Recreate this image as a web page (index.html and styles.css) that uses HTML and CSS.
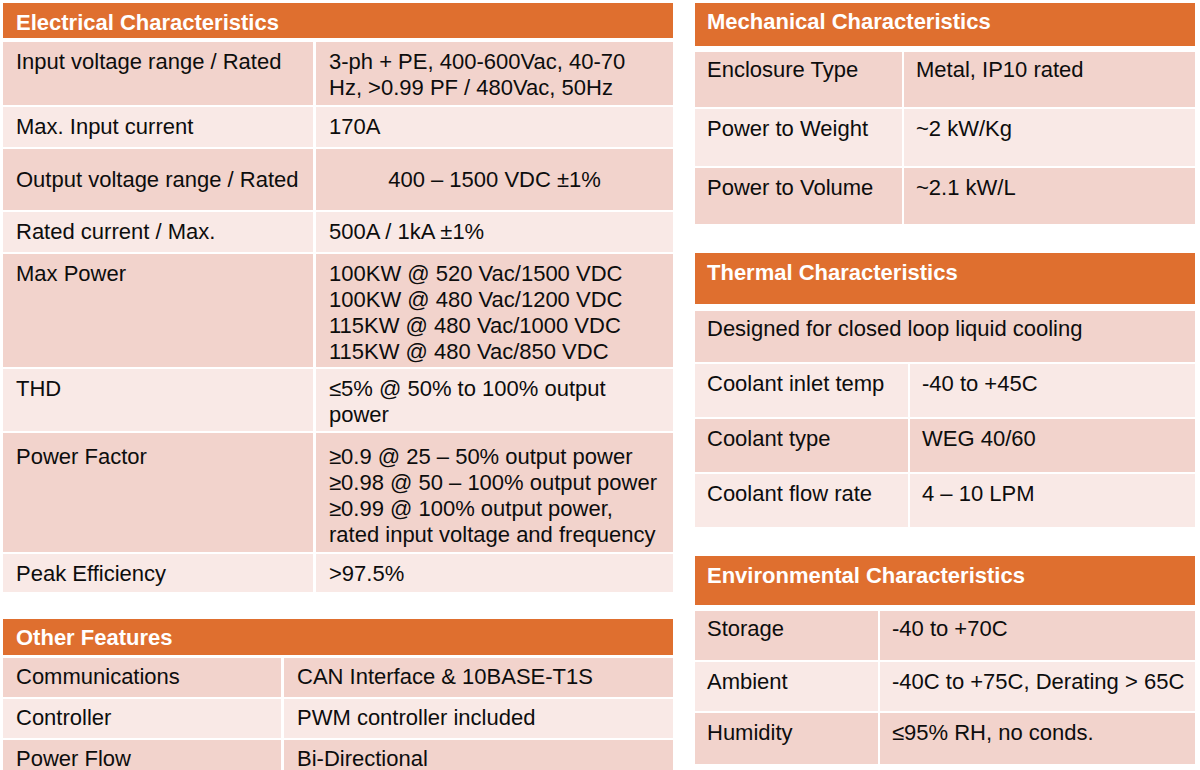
FILE: index.html
```html
<!DOCTYPE html>
<html lang="en">
<head>
<meta charset="utf-8">
<title>Specifications</title>
<link rel="stylesheet" href="styles.css">
</head>
<body>
<main class="page">
  <div class="col col-left">
    <section class="spec spec-elec">
      <h2 class="spec-head">Electrical Characteristics</h2>
      <div class="spec-body">
        <div class="row dark"><div class="cell">Input voltage range / Rated</div><div class="cell">3-ph + PE, 400-600Vac, 40-70<br>Hz, &gt;0.99 PF / 480Vac, 50Hz</div></div>
        <div class="row light"><div class="cell">Max. Input current</div><div class="cell">170A</div></div>
        <div class="row dark"><div class="cell cell-mid">Output voltage range / Rated</div><div class="cell cell-center">400 – 1500 VDC ±1%</div></div>
        <div class="row light"><div class="cell">Rated current / Max.</div><div class="cell">500A / 1kA ±1%</div></div>
        <div class="row dark"><div class="cell">Max Power</div><div class="cell">100KW @ 520 Vac/1500 VDC<br>100KW @ 480 Vac/1200 VDC<br>115KW @ 480 Vac/1000 VDC<br>115KW @ 480 Vac/850 VDC</div></div>
        <div class="row light"><div class="cell">THD</div><div class="cell">≤5% @ 50% to 100% output<br>power</div></div>
        <div class="row dark row-pf"><div class="cell">Power Factor</div><div class="cell">≥0.9 @ 25 – 50% output power<br>≥0.98 @ 50 – 100% output power<br>≥0.99 @ 100% output power,<br>rated input voltage and frequency</div></div>
        <div class="row light"><div class="cell">Peak Efficiency</div><div class="cell">&gt;97.5%</div></div>
      </div>
    </section>

    <section class="spec spec-other">
      <h2 class="spec-head">Other Features</h2>
      <div class="spec-body">
        <div class="row dark"><div class="cell">Communications</div><div class="cell">CAN Interface &amp; 10BASE-T1S</div></div>
        <div class="row light"><div class="cell">Controller</div><div class="cell">PWM controller included</div></div>
        <div class="row dark"><div class="cell">Power Flow</div><div class="cell">Bi-Directional</div></div>
      </div>
    </section>
  </div>

  <div class="col col-right">
    <section class="spec spec-mech">
      <h2 class="spec-head">Mechanical Characteristics</h2>
      <div class="spec-body">
        <div class="row dark"><div class="cell">Enclosure Type</div><div class="cell">Metal, IP10 rated</div></div>
        <div class="row light"><div class="cell">Power to Weight</div><div class="cell">~2 kW/Kg</div></div>
        <div class="row dark"><div class="cell">Power to Volume</div><div class="cell">~2.1 kW/L</div></div>
      </div>
    </section>

    <section class="spec spec-therm">
      <h2 class="spec-head">Thermal Characteristics</h2>
      <div class="spec-body">
        <div class="row dark row-full"><div class="cell">Designed for closed loop liquid cooling</div></div>
        <div class="row light"><div class="cell">Coolant inlet temp</div><div class="cell">-40 to +45C</div></div>
        <div class="row dark"><div class="cell">Coolant type</div><div class="cell">WEG 40/60</div></div>
        <div class="row light"><div class="cell">Coolant flow rate</div><div class="cell">4 – 10 LPM</div></div>
      </div>
    </section>

    <section class="spec spec-env">
      <h2 class="spec-head">Environmental Characteristics</h2>
      <div class="spec-body">
        <div class="row dark"><div class="cell">Storage</div><div class="cell">-40 to +70C</div></div>
        <div class="row light"><div class="cell">Ambient</div><div class="cell">-40C to +75C, Derating &gt; 65C</div></div>
        <div class="row dark"><div class="cell">Humidity</div><div class="cell">≤95% RH, no conds.</div></div>
      </div>
    </section>
  </div>
</main>
</body>
</html>
```

FILE: styles.css
```css
html, body {
  margin: 0;
  padding: 0;
  background: #ffffff;
}

body {
  width: 1200px;
  height: 770px;
  overflow: hidden;
  font-family: "Liberation Sans", Arial, sans-serif;
  font-size: 22px;
  line-height: 26px;
  color: #0d0d0d;
}

.page {
  display: flex;
  gap: 22px;
  padding: 3px 0 0 3px;
}

.col {
  display: flex;
  flex-direction: column;
}

.col-left {
  width: 670px;
  gap: 27px;
}

.col-right {
  width: 500px;
  gap: 29px;
}

.spec {
  display: flex;
  flex-direction: column;
}

.spec-head {
  margin: 0;
  box-sizing: border-box;
  background: #df6f2f;
  color: #ffffff;
  font-size: 22px;
  font-weight: bold;
  line-height: 26px;
  padding: 6px 12px 0;
}

.spec-body {
  display: flex;
  flex-direction: column;
  gap: 2px;
}

.row {
  display: grid;
  column-gap: 2px;
  box-sizing: border-box;
}

.row-full {
  grid-template-columns: 1fr !important;
}

.cell {
  padding: 5px 12px 0;
  white-space: nowrap;
  overflow: hidden;
}

.dark .cell { background: #f2d3cc; }
.light .cell { background: #f9e9e6; }

.cell-mid {
  display: flex;
  align-items: center;
  padding-top: 0;
}

.cell-center {
  display: flex;
  align-items: center;
  justify-content: center;
  padding: 0 12px;
}

/* Electrical */
.spec-elec .spec-head { height: 35px; margin-bottom: 4px; padding-left: 13px; padding-top: 7px; }
.spec-elec .row { grid-template-columns: 310px 1fr; column-gap: 3px; }
.spec-elec .cell { padding: 7px 12px 0 13px; }
.spec-elec .row-pf .cell { padding-top: 11px; }
.spec-elec .cell-mid { padding-top: 0; }
.spec-elec .cell-center { padding: 0 12px; }
.spec-elec .row:nth-child(1) { height: 63px; }
.spec-elec .row:nth-child(2) { height: 40px; }
.spec-elec .row:nth-child(3) { height: 61px; }
.spec-elec .row:nth-child(4) { height: 40px; }
.spec-elec .row:nth-child(5) { height: 113px; }
.spec-elec .row:nth-child(6) { height: 62px; }
.spec-elec .row:nth-child(7) { height: 119px; }
.spec-elec .row:nth-child(8) { height: 38px; }

/* Other features */
.spec-other .spec-head { height: 36px; margin-bottom: 3px; padding-left: 13px; padding-top: 6px; }
.spec-other .row { grid-template-columns: 278px 1fr; column-gap: 3px; height: 39px; }
.spec-other .cell { padding: 6px 12px 0 13px; }

/* Mechanical */
.spec-mech .spec-head { height: 43px; margin-bottom: 6px; }
.spec-mech .row { grid-template-columns: 207px 1fr; }
.spec-mech .row:nth-child(n+2) .cell { padding-top: 7px; }
.spec-mech .row:nth-child(1) { height: 55px; }
.spec-mech .row:nth-child(2) { height: 57px; }
.spec-mech .row:nth-child(3) { height: 56px; }

/* Thermal */
.spec-therm .spec-head { height: 51px; margin-bottom: 7px; padding-top: 7px; }
.spec-therm .row { grid-template-columns: 213px 1fr; height: 53px; }
.spec-therm .row:nth-child(1) { height: 51px; }
.spec-therm .row:nth-child(n+2) .cell { padding-top: 7px; }

/* Environmental */
.spec-env .spec-head { height: 49px; margin-bottom: 6px; padding-top: 7px; }
.spec-env .row { grid-template-columns: 183px 1fr; height: 49px; }
.spec-env .row:nth-child(n+2) .cell { padding-top: 7px; }
.spec-env .row:nth-child(3) { height: 51px; }
```
